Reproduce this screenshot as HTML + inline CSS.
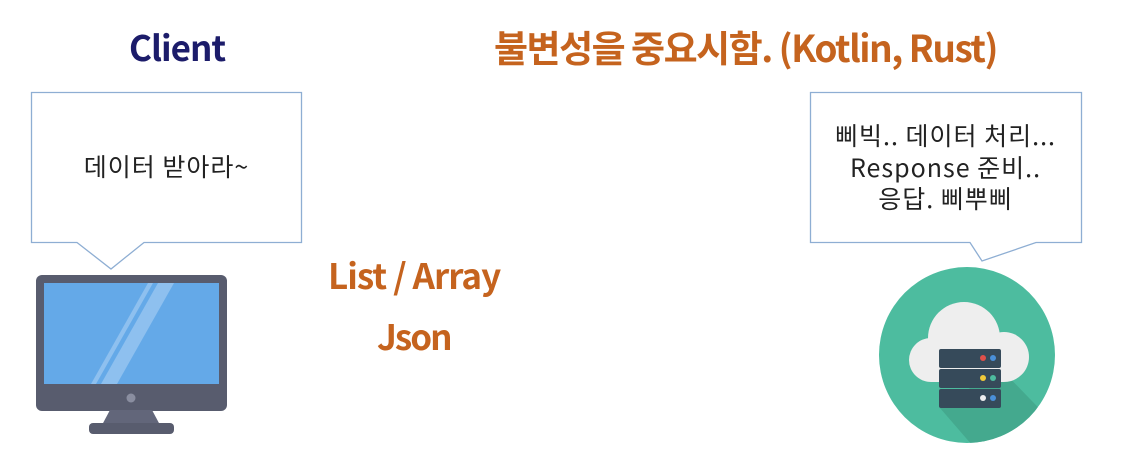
<!DOCTYPE html>
<html><head><meta charset="utf-8"><style>
html,body{margin:0;padding:0;background:#fff;}
body{width:1145px;height:459px;position:relative;overflow:hidden;font-family:"Liberation Sans","Noto Sans CJK KR",sans-serif;}
.t{position:absolute;white-space:nowrap;font-weight:bold;letter-spacing:-1px;font-family:"Noto Sans CJK KR","Liberation Sans",sans-serif;}
.b{position:absolute;white-space:nowrap;text-align:center;color:#222;font-size:25px;line-height:31.5px;letter-spacing:1px;font-family:"Noto Sans CJK KR","Liberation Sans",sans-serif;}
</style></head><body>
<div class="t" style="left:129px;top:22px;font-size:35px;color:#1c1c6a;line-height:50px;">Client</div>
<div class="t" style="left:494px;top:21px;font-size:37px;color:#c5631e;line-height:50px;letter-spacing:-1.5px;">불변성을 중요시함. (Kotlin, Rust)</div>
<div class="t" style="left:328px;top:250px;font-size:35px;color:#c5631e;line-height:50px;">List / Array</div>
<div class="t" style="left:377px;top:311px;font-size:35px;color:#c5631e;line-height:50px;letter-spacing:-2px;">Json</div>

<svg width="1145" height="459" style="position:absolute;left:0;top:0">
  <path d="M31.5 92.5 H301.5 V242.5 H144 L111 269 L77 242.5 H31.5 Z" fill="#fff" stroke="#8eaed3" stroke-width="1.3"/>
  <path d="M810.5 92.5 H1081.5 V242.5 H1036 L982 261 L970 242.5 H810.5 Z" fill="#fff" stroke="#8eaed3" stroke-width="1.3"/>
  <rect x="36" y="275" width="191" height="136" rx="6" fill="#585c6e"/>
  <rect x="44" y="283" width="175" height="101" fill="#64a9e8"/>
  <polygon points="148,283 153,283 96,384 91,384" fill="#8ec0ef"/>
  <polygon points="158,283 174,283 117,384 101,384" fill="#8ec0ef"/>
  <circle cx="131" cy="398" r="4.5" fill="#8a8ea0"/>
  <polygon points="110,410 152,410 160,425 102,425" fill="#62667a"/>
  <rect x="89" y="423" width="85" height="11" rx="4" fill="#585c6e"/>
  <defs><clipPath id="c"><circle cx="967" cy="355" r="88"/></clipPath></defs>
  <circle cx="967" cy="355" r="88" fill="#4dbc9f"/>
  <polygon points="1000,368 1060,430 1060,460 985,460 940,408" fill="#44a98e" clip-path="url(#c)"/>
  <g fill="#eeeeee">
    <circle cx="931" cy="360" r="22"/>
    <circle cx="964" cy="338" r="36"/>
    <circle cx="1004" cy="357" r="25"/>
    <rect x="931" y="345" width="73" height="37"/>
  </g>
  <rect x="939" y="349" width="62" height="19" rx="2" fill="#364a5a"/>
  <rect x="939" y="369" width="62" height="19" rx="2" fill="#364a5a"/>
  <rect x="939" y="389" width="62" height="19" rx="2" fill="#364a5a"/>
  <circle cx="983" cy="358" r="3" fill="#e0504a"/><circle cx="993" cy="358" r="3" fill="#4a90d9"/>
  <circle cx="983" cy="378" r="3" fill="#f0c93a"/><circle cx="993" cy="378" r="3" fill="#4dbc9f"/>
  <circle cx="983" cy="398" r="3" fill="#eeeeee"/><circle cx="993" cy="398" r="3" fill="#4a90d9"/>
</svg>

<div class="b" style="left:31px;width:271px;top:151px;">데이터 받아라~</div>
<div class="b" style="left:810px;width:271px;top:120px;">삐빅.. 데이터 처리...<br>Response 준비..<br>응답. 삐뿌삐</div>
</body></html>
